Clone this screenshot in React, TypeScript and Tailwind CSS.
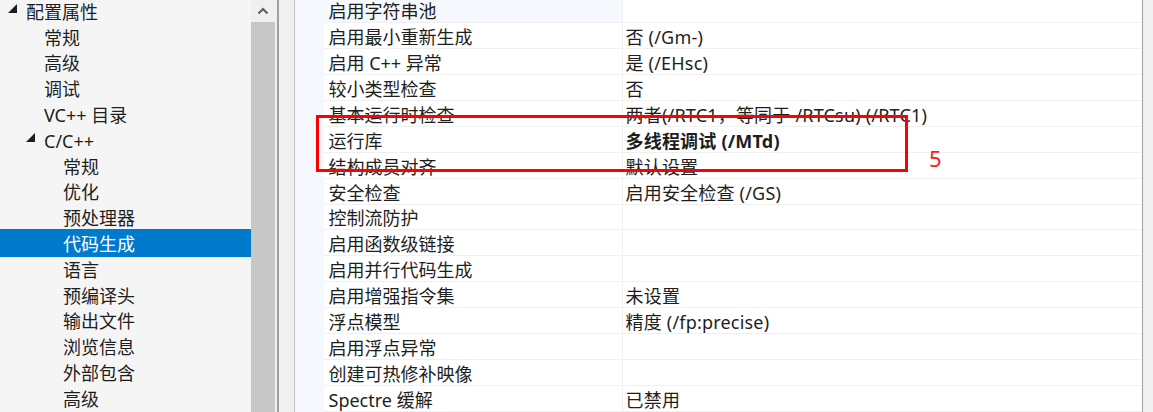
import React from 'react';

const FONT = { fontFamily: '"Noto Sans", "Noto Sans CJK SC", sans-serif' };

type TreeItem = { label: string; level: 0 | 1 | 2; expander?: boolean; selected?: boolean };

const tree: TreeItem[] = [
  { label: '配置属性', level: 0, expander: true },
  { label: '常规', level: 1 },
  { label: '高级', level: 1 },
  { label: '调试', level: 1 },
  { label: 'VC++ 目录', level: 1 },
  { label: 'C/C++', level: 1, expander: true },
  { label: '常规', level: 2 },
  { label: '优化', level: 2 },
  { label: '预处理器', level: 2 },
  { label: '代码生成', level: 2, selected: true },
  { label: '语言', level: 2 },
  { label: '预编译头', level: 2 },
  { label: '输出文件', level: 2 },
  { label: '浏览信息', level: 2 },
  { label: '外部包含', level: 2 },
  { label: '高级', level: 2 },
];

const indent = { 0: 'pl-[8px]', 1: 'pl-[26px]', 2: 'pl-[45px]' };

type Prop = { name: string; value?: string; bold?: boolean };

const props: Prop[] = [
  { name: '启用字符串池' },
  { name: '启用最小重新生成', value: '否 (/Gm-)' },
  { name: '启用 C++ 异常', value: '是 (/EHsc)' },
  { name: '较小类型检查', value: '否' },
  { name: '基本运行时检查', value: '两者(/RTC1，等同于 /RTCsu) (/RTC1)' },
  { name: '运行库', value: '多线程调试 (/MTd)', bold: true },
  { name: '结构成员对齐', value: '默认设置' },
  { name: '安全检查', value: '启用安全检查 (/GS)' },
  { name: '控制流防护' },
  { name: '启用函数级链接' },
  { name: '启用并行代码生成' },
  { name: '启用增强指令集', value: '未设置' },
  { name: '浮点模型', value: '精度 (/fp:precise)' },
  { name: '启用浮点异常' },
  { name: '创建可热修补映像' },
  { name: 'Spectre 缓解', value: '已禁用' },
];

function Expander() {
  return (
    <svg width="9" height="9" viewBox="0 0 9 9" className="mt-[-4px]">
      <polygon points="9,0 9,9 0,9" fill="#1e1e1e" />
    </svg>
  );
}

function TreePanel() {
  return (
    <div className="w-[251px] shrink-0 bg-[#f5f5f5] overflow-hidden">
      <div className="mt-[-2px] flex flex-col">
        {tree.map((item, i) => (
          <div
            key={i}
            className={`flex items-center ${indent[item.level]} ${
              item.selected ? 'h-[27.8px] -my-px bg-[#007acc] text-white' : 'h-[25.8px] text-[#1e1e1e]'
            }`}
          >
            <span className="w-[18px] shrink-0 flex items-center">{item.expander && <Expander />}</span>
            <span className="text-[18px] leading-none whitespace-nowrap pt-[2px]">{item.label}</span>
          </div>
        ))}
      </div>
    </div>
  );
}

function ScrollBar() {
  return (
    <div className="w-[24px] shrink-0 flex flex-col bg-[#f0f0f0]">
      <div className="h-[22px] flex items-center justify-center">
        <svg width="12" height="8" viewBox="0 0 12 8">
          <path d="M1.5 6.5 L6 2 L10.5 6.5" fill="none" stroke="#606060" strokeWidth="2.2" />
        </svg>
      </div>
      <div className="flex-1 bg-[#c8c8c8]" />
    </div>
  );
}

function PropertyGrid() {
  return (
    <div className="flex-1 flex bg-[#f5f8fc] overflow-hidden">
      <div className="w-[29px] shrink-0" />
      <div className="w-[819px] shrink-0 mt-[-3px] flex flex-col">
        {props.map((p, i) => (
          <div key={i} className="h-[26px] flex border-b border-[#f0f0f0] text-[#1e1e1e]">
            <div
              className={`w-[299px] shrink-0 border-r border-[#f0f0f0] pl-[5px] flex items-center ${
                i === 0 ? 'bg-[#f5f8fc]' : 'bg-white'
              }`}
            >
              <span className="text-[18px] leading-none whitespace-nowrap pt-[3px]">{p.name}</span>
            </div>
            <div className="flex-1 bg-white pl-[3px] flex items-center">
              {p.value && (
                <span
                  className={`text-[18px] leading-none whitespace-nowrap pt-[3px] tracking-[0.2px] ${
                    p.bold ? 'font-bold' : ''
                  }`}
                >
                  {p.value}
                </span>
              )}
            </div>
          </div>
        ))}
      </div>
    </div>
  );
}

export default function App() {
  return (
    <div className="relative w-[1153px] h-[412px] overflow-hidden flex bg-[#f0f0f0]" style={FONT}>
      <TreePanel />
      <ScrollBar />
      <div className="w-[2px] shrink-0" />
      <div className="w-[1.5px] shrink-0 bg-[#a0a0a0]" />
      <div className="w-[15px] shrink-0" />
      <div className="w-px shrink-0 bg-[#c4c4c4]" />
      <div className="w-[847px] shrink-0 flex">
        <PropertyGrid />
      </div>
      <div className="w-[1.5px] shrink-0 bg-[#a0a0a0]" />
      <div className="flex-1" />

      {/* annotation */}
      <div className="absolute left-[316px] top-[115px] w-[592px] h-[57px] border-[3px] border-[#ff0000]" />
      <span className="absolute left-[929px] top-[147px] text-[22px] leading-none text-[#ff1a1a]">5</span>
    </div>
  );
}
